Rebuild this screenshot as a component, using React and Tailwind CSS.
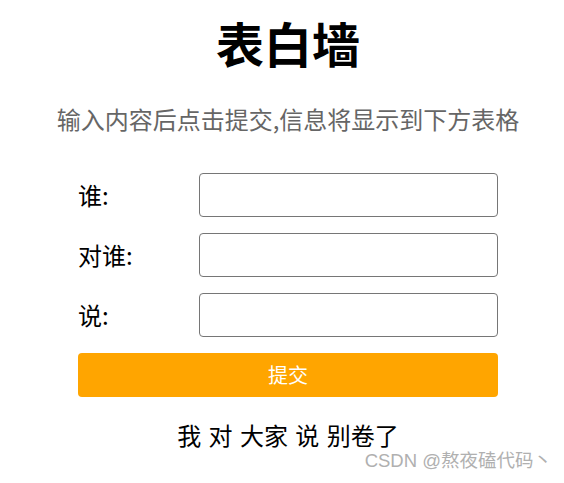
export default function App() {
  const rows = ["谁:", "对谁:", "说:"];
  return (
    <div className="relative min-h-[483px] pl-[12px] flex flex-col items-center bg-white text-black font-['Microsoft_YaHei','Noto_Sans_CJK_SC',sans-serif]">
      <h1 className="mt-[14px] text-[48px] leading-[56px] font-bold">表白墙</h1>
      <p className="mt-[33px] text-[24px] leading-[32px] text-[#666666]">
        输入内容后点击提交,信息将显示到下方表格
      </p>
      <div className="mt-[38px] w-[420px] flex flex-col gap-4">
        {rows.map((label) => (
          <div key={label} className="flex items-center h-[44px]">
            <span className="w-[121px] text-[24px]">{label}</span>
            <input className="w-[299px] h-[44px] border border-[#767676] rounded-[4px] outline-none" />
          </div>
        ))}
        <button className="h-[44px] rounded-[4px] bg-[#ffa500] text-white text-[20px]">提交</button>
      </div>
      <div className="mt-[22px] text-[24px] leading-[32px] whitespace-pre [word-spacing:2px]">我 对 大家 说 别卷了</div>
      <div className="absolute right-[12px] bottom-[8px] text-[18.5px] text-[#b0b0b0] font-['Liberation_Sans','Noto_Sans_CJK_SC',sans-serif]">
        CSDN @熬夜磕代码丶
      </div>
    </div>
  );
}
